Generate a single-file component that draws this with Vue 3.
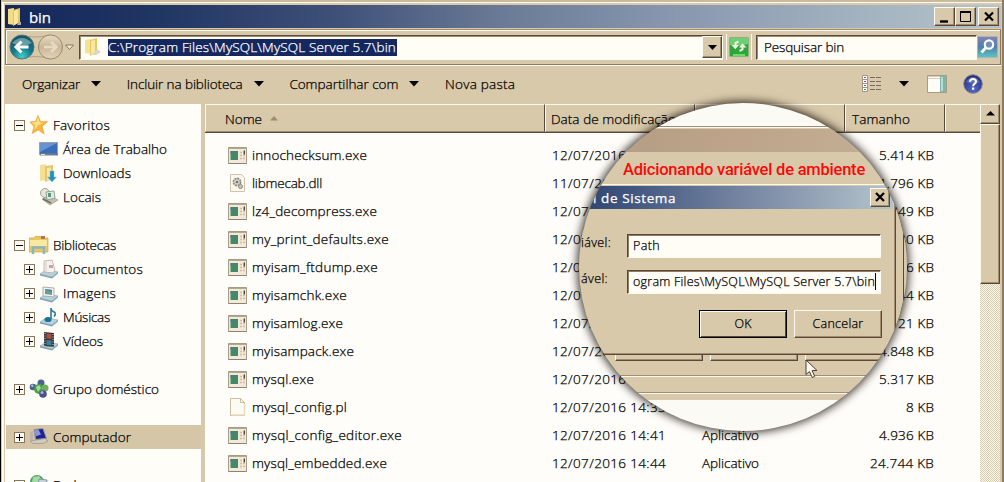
<script setup>
// Spreads a label over a fixed advance width, like hinted bitmap fonts do.
const vFit = {
  mounted(el, { value }) {
    if (!value) return
    const n = el.textContent.length
    const natural = el.getBoundingClientRect().width
    const gap = (value + 1 - natural) / n
    el.style.letterSpacing = gap.toFixed(3) + 'px'
  }
}

const commands = [
  { text: 'Organizar', w: 57, arrow: true },
  { text: 'Incluir na biblioteca', w: 115, arrow: true },
  { text: 'Compartilhar com', w: 108, arrow: true },
  { text: 'Nova pasta', w: 69, arrow: false }
]

const tree = [
  { text: 'Favoritos', w: 56, icon: 'star', box: '-' },
  { text: 'Área de Trabalho', w: 103, icon: 'desktop', sub: true },
  { text: 'Downloads', w: 67, icon: 'downloads', sub: true },
  { text: 'Locais', w: 37, icon: 'places', sub: true },
  {},
  { text: 'Bibliotecas', w: 62, icon: 'library', box: '-' },
  { text: 'Documentos', w: 79, icon: 'docs', box: '+', sub: true },
  { text: 'Imagens', w: 52, icon: 'images', box: '+', sub: true },
  { text: 'Músicas', w: 46, icon: 'music', box: '+', sub: true },
  { text: 'Vídeos', w: 39, icon: 'video', box: '+', sub: true },
  {},
  { text: 'Grupo doméstico', w: 105, icon: 'group', box: '+' },
  {},
  { text: 'Computador', w: 77, icon: 'computer', box: '+', selected: true },
  {},
  { text: 'Rede', w: 30, icon: 'network', box: '+' }
]

const files = [
  { name: 'innochecksum.exe', w: 114, date: '12/07/2016 14:41', type: 'Aplicativo', size: '5.414 KB', sw: 54 },
  { name: 'libmecab.dll', w: 69, date: '11/07/2016 14:41', type: 'Extensão', size: '1.796 KB', sw: 54, icon: 'dll' },
  { name: 'lz4_decompress.exe', w: 124, date: '12/07/2016 14:41', type: 'Aplicativo', size: '4.849 KB', sw: 54 },
  { name: 'my_print_defaults.exe', w: 136, date: '12/07/2016 14:41', type: 'Aplicativo', size: '4.780 KB', sw: 54 },
  { name: 'myisam_ftdump.exe', w: 125, date: '12/07/2016 14:41', type: 'Aplicativo', size: '5.116 KB', sw: 54 },
  { name: 'myisamchk.exe', w: 94, date: '12/07/2016 14:41', type: 'Aplicativo', size: '5.244 KB', sw: 54 },
  { name: 'myisamlog.exe', w: 90, date: '12/07/2016 14:41', type: 'Aplicativo', size: '5.121 KB', sw: 54 },
  { name: 'myisampack.exe', w: 101, date: '12/07/2016 14:41', type: 'Aplicativo', size: '4.848 KB', sw: 54 },
  { name: 'mysql.exe', w: 61, date: '12/07/2016 14:41', type: 'Aplicativo', size: '5.317 KB', sw: 54 },
  { name: 'mysql_config.pl', w: 94, date: '12/07/2016 14:33', type: 'Arquivo PL', size: '8 KB', sw: 27, icon: 'page' },
  { name: 'mysql_config_editor.exe', w: 149, date: '12/07/2016 14:41', type: 'Aplicativo', size: '4.936 KB', sw: 54 },
  { name: 'mysql_embedded.exe', w: 134, date: '12/07/2016 14:44', type: 'Aplicativo', size: '24.744 KB', sw: 63 }
]
</script>

<template>
  <div class="screen">
    <div class="window">
      <div class="titlebar">
        <svg class="ic-folder" width="16" height="20" viewBox="0 0 16 20">
          <path d="M1 2l6-1v17l-6-1z" fill="#f4dc84" /><path d="M6 3l7-2v14l-7 4z" fill="#e9c65c" /><path d="M7 4l4-1v13l-4 2z" fill="#f8e8a0" /><path d="M12 15h2v3h-4z" fill="#b9ae8e" />
        </svg>
        <span v-fit="21" class="t title">bin</span>
        <div class="winbtns">
          <b><svg width="19" height="17"><path d="M5 13.5h8" stroke="#000" stroke-width="2.4" /></svg></b>
          <b><svg width="19" height="17"><path d="M4.5 4h10v9.500h-10z" fill="none" stroke="#000" /><path d="M4 4h11" stroke="#000" stroke-width="2" /></svg></b>
          <b class="close"><svg width="19" height="17"><path d="M6 4.500l8 8M14 4.500l-8 8" stroke="#000" stroke-width="2.200" /></svg></b>
        </div>
      </div>

      <div class="navbar">
        <svg class="navs" width="72" height="30" viewBox="0 0 72 30">
          <defs>
            <radialGradient id="gb" cx=".5" cy=".9" r=".9"><stop offset="0" stop-color="#3fd0cc" /><stop offset=".45" stop-color="#14788a" /><stop offset="1" stop-color="#174f60" /></radialGradient>
            <linearGradient id="gf" x2="0" y2="1"><stop offset="0" stop-color="#e8dcc4" /><stop offset=".5" stop-color="#c9b797" /><stop offset="1" stop-color="#e2d5ba" /></linearGradient>
          </defs>
          <path d="M12 3Q30 7 44 3" fill="none" stroke="#b5a382" /><path d="M12 27Q30 22 44 27" fill="none" stroke="#b5a382" />
          <circle cx="16" cy="15" r="12" fill="url(#gb)" stroke="#5f7775" />
          <path d="M6 11Q16 1 26 11Q16 16 6 11z" fill="#b6d3d5" opacity=".5" />
          <path d="M22.500 15H11M15.500 9.500L10 15l5.500 5.500" fill="none" stroke="#fff" stroke-width="3" />
          <circle cx="44.500" cy="15" r="12" fill="url(#gf)" stroke="#9c8a6e" />
          <path d="M38 15h12M45 10l5.500 5-5.500 5" fill="none" stroke="#e6dac3" stroke-width="2.500" />
          <path d="M59.500 13h8l-4 4.500z" fill="#f4ead6" stroke="#8a775c" />
        </svg>
        <div class="address">
          <svg width="20" height="22" viewBox="0 0 20 22">
            <path d="M2 4l6-1v15l-6-1z" fill="#f6e294" /><path d="M7 4l7-2v14l-7 4z" fill="#e8c766" /><path d="M8 5l4-1v13l-4 2z" fill="#f8e8a0" /><path d="M14 13l4 3-5 3h-4z" fill="#d9d5c9" />
          </svg>
          <span class="sel"><span v-fit="287" class="t">C:\Program Files\MySQL\MySQL Server 5.7\bin</span></span>
          <b class="drop"><svg width="18" height="19"><path d="M5 8h9l-4.500 5z" fill="#000" /></svg></b>
        </div>
        <div class="refresh">
          <svg width="20" height="20" viewBox="0 0 20 20">
            <rect x=".5" y=".5" width="19" height="19" rx="1" fill="#2fa43e" stroke="#8fae81" /><path d="M1 1h18v6Q10 10 1 8z" fill="#6fcf77" /><path d="M4 17h12v2H4z" fill="#61e260" />
            <path d="M9.500 4.500L6.500 6v3M10.500 14l3-1.500v-3" fill="none" stroke="#edf7dc" stroke-width="2" /><path d="M2.500 8h7.500L6.300 12.300zM10 10.500h7.500l-4-4.300z" fill="#edf7dc" />
          </svg>
        </div>
        <div class="search"><span v-fit="79" class="t">Pesquisar bin</span></div>
        <svg class="mag" width="21" height="22" viewBox="0 0 21 22">
          <defs><linearGradient id="gm" x2="0" y2="1"><stop offset="0" stop-color="#8583b4" /><stop offset=".5" stop-color="#4f7fa9" /><stop offset="1" stop-color="#5cc6c4" /></linearGradient></defs>
          <rect x=".5" y=".5" width="20" height="21" fill="url(#gm)" stroke="#a8b5bb" />
          <circle cx="12" cy="8.500" r="4.200" fill="#6d92b6" stroke="#fff" stroke-width="2.200" /><path d="M9 11.500L4.500 16.500" stroke="#fff" stroke-width="2.800" />
        </svg>
      </div>

      <div class="toolbar">
        <div v-for="c in commands" :key="c.text" class="cmd">
          <span v-fit="c.w" class="t">{{ c.text }}</span>
          <svg v-if="c.arrow" width="10" height="6"><path d="M0 0h10L5 5.500z" fill="#000" /></svg>
        </div>
        <div class="tools">
          <svg width="20" height="17" viewBox="0 0 20 17">
            <path d="M.5.500h5v16h-5zM.5 4.500h5M.5 8.500h5M.5 12.500h5" fill="#fff" stroke="#a39380" /><path d="M2 2.500h2M2 10.500h2" stroke="#4b62b5" /><path d="M2 6.500h2" stroke="#e0307a" /><path d="M2 14.500h2" stroke="#3f9b4c" />
            <path d="M8 2.500h5M14 2.500h5M8 6.500h5M14 6.500h5M8 10.500h5M14 10.500h5M8 14.500h5M14 14.500h5" stroke="#7c6b5c" />
          </svg>
          <svg class="dd" width="10" height="6"><path d="M0 0h10L5 5.500z" fill="#000" /></svg>
          <svg class="pane" width="20" height="18" viewBox="0 0 20 18">
            <path d="M.5.500h19v17H.5z" fill="#fffdf6" stroke="#a79b84" /><path d="M1 1h12v3H1z" fill="#e4c9b8" /><path d="M1 2.500h12" stroke="#fffdf6" /><path d="M13 1h6v16h-6z" fill="#7fb6aa" /><path d="M14 2h2v14h-2z" fill="#b9dcd2" />
          </svg>
          <svg class="help" width="20" height="20" viewBox="0 0 20 20">
            <defs><radialGradient id="gh" cx=".5" cy=".8" r=".8"><stop offset="0" stop-color="#5568c4" /><stop offset="1" stop-color="#202c7c" /></radialGradient></defs>
            <circle cx="10" cy="10" r="9.300" fill="url(#gh)" stroke="#87848e" /><path d="M3 8Q10-2 17 8Q10 11 3 8z" fill="#fff" opacity=".22" />
            <path d="M7 7.800Q7.200 5 10 5q3 0 3 2.500 0 1.300-1.500 2.300-1.400.9-1.400 2.400" fill="none" stroke="#fff" stroke-width="2" /><path d="M9 13.500h2.200v2.200H9z" fill="#fff" />
          </svg>
        </div>
      </div>

      <div class="content">
        <div class="tree">
          <div v-for="(n, i) in tree" :key="i" class="node" :class="{ sub: n.sub, selected: n.selected }">
            <template v-if="n.text">
              <svg class="box" width="11" height="11" viewBox="0 0 11 11">
                <template v-if="n.box"><rect x=".5" y=".5" width="10" height="10" fill="#fffdf8" stroke="#8b7659" /><path d="M2 5.500h7" stroke="#000" /><path v-if="n.box === '+'" d="M5.500 2v7" stroke="#000" /></template>
              </svg>
              <svg class="nic" width="20" height="20" viewBox="0 0 20 20">
                <template v-if="n.icon === 'star'"><path d="M9 .5l2.500 6 7 .2-5.300 4.700 2 7.600-6-4-6 3.500 1.800-7L.8 7l6-.7z" fill="#f6b53c" stroke="#e9a33a" stroke-width=".7" /><path d="M9 2l1.800 5.500 4 .3-5 2.200-4.500 5 1-5-4-2.500 5-.5z" fill="#ffe08a" /></template>
                <template v-else-if="n.icon === 'desktop'"><path d="M.5 3.500h18v12H.5z" fill="#3c6db8" stroke="#9aa0a6" /><path d="M1 4h17L1 13z" fill="#7fa5dc" opacity=".65" /><path d="M1 14.500h18v2H1z" fill="#707f91" /><path d="M2 15.500h4" stroke="#e7e4d5" /></template>
                <template v-else-if="n.icon === 'downloads'"><path d="M1 2l6-1v16l-6 1z" fill="#f5df93" /><path d="M6 3l8-1v14l-8 3z" fill="#e6c671" /><path d="M8 5l4-.5V16l-4 1.500z" fill="#f8e8a7" /><path d="M11 8h4v6h2.500L13 19l-4.500-5H11z" fill="#2a8fb8" stroke="#7fc0d4" stroke-width=".5" /></template>
                <template v-else-if="n.icon === 'places'"><circle cx="6" cy="6" r="4.500" fill="#e7e4da" stroke="#a5a294" /><path d="M3 12l8-3 8 4-8 5z" fill="#c2bea7" stroke="#95917c" stroke-width=".6" /><path d="M7 5l8-1 1 7-8 2z" fill="#dfe9e4" stroke="#8fa59c" /><path d="M9 6h3v4H9z" fill="#5c9773" /><path d="M4 12l8 4" stroke="#6a7460" stroke-width="1.500" /></template>
                <template v-else-if="n.icon === 'library'"><path d="M0 3h5l1-1.500h6L13 3h6v14H0z" fill="#ecc75f" stroke="#cfa64a" stroke-width=".7" /><path d="M1 5h17v6H1z" fill="#fae7a0" /><path d="M12 1h4v3h-4z" fill="#b8725a" /><path d="M4 19v-6.500h11V19" fill="none" stroke="#86b6c2" stroke-width="2.500" /></template>
                <template v-else-if="n.icon === 'group'"><circle cx="4" cy="8" r="3.300" fill="#4c5f91" /><circle cx="3.300" cy="6.800" r="1.200" fill="#b4c0dc" /><circle cx="12" cy="4" r="3.500" fill="#49628f" /><circle cx="10" cy="10" r="5" fill="#49a045" /><path d="M7 8l3-2 2 3-3 4z" fill="#a9d998" /><circle cx="16" cy="9" r="3.500" fill="#6fb15b" /><circle cx="14" cy="15" r="3.800" fill="#4a4f90" /><circle cx="13" cy="13.500" r="1.500" fill="#aeb6dc" /></template>
                <template v-else-if="n.icon === 'computer'"><path d="M5 2.500l9-1 3.500 10-11 1z" fill="#1f2391" stroke="#9c9a9a" /><path d="M5.500 3l4-.4 2.500 5-5.500 2z" fill="#9093d6" /><path d="M1 5l3-1v9H1z" fill="#b9b5a8" /><path d="M1 14l15-2.500 3 2.500-5 2.500H4z" fill="#d0cbbd" stroke="#8e897c" stroke-width=".6" /></template>
                <template v-else-if="n.icon === 'network'"><circle cx="8" cy="7" r="7" fill="#4b9a6b" /><path d="M4 2l6-1 3 4-5 3-5-1z" fill="#a2dca3" /><path d="M10 4l8 1-1 8H9z" fill="#c8d4dc" stroke="#8594a4" /></template>
                <template v-else>
                  <path d="M1 15l6-4 12 2-6 5z" fill="#b9d3dd" stroke="#8dadb9" stroke-width=".7" />
                  <path d="M1 15l12 3 6-5v1.500L13 19.500 1 16.500z" fill="#7fa3b3" />
                  <template v-if="n.icon === 'docs'"><path d="M5 2l8-1 3 10-2 3-9-1z" fill="#f5f1ec" stroke="#b9a9a2" stroke-width=".8" /><path d="M10 6h4v3h-4z" fill="#c2a7a8" /><path d="M7 3v10" stroke="#d5ccc6" /></template>
                  <template v-else-if="n.icon === 'images'"><path d="M4 4l11 1v9l-11-1z" fill="#eff2ee" stroke="#a6b0ab" /><path d="M6 6l7 1v5l-7-1z" fill="#6b9c92" /><path d="M6 6l7 1v2z" fill="#54789d" /></template>
                  <template v-else-if="n.icon === 'music'"><ellipse cx="9" cy="12.500" rx="3.500" ry="2.600" fill="#1f7091" /><path d="M12 12V1q0 3 4 4.500 1 2-1 4" fill="none" stroke="#2a7a98" stroke-width="1.600" /></template>
                  <template v-else><path d="M5 1l10 1v14l-10-1z" fill="#30383a" /><path d="M7.500 2.500l5 .5v5l-5-.5z" fill="#b44a3c" /><path d="M7.500 9l5 .5v5l-5-.5z" fill="#3d7fa0" /><path d="M6 2v13M14 3v13" stroke="#d8dcd6" stroke-dasharray="1 1.500" /></template>
                </template>
              </svg>
              <span v-fit="n.w" class="t">{{ n.text }}</span>
            </template>
          </div>
        </div>

        <div class="list">
          <div class="heads">
            <div class="head hname"><span v-fit="36" class="t">Nome</span><svg width="8" height="5"><path d="M0 4.500h8L4 0z" fill="#a08b6c" /></svg></div>
            <div class="head hdate"><span v-fit="124" class="t">Data de modificação</span></div>
            <div class="head htype"><span class="t">Tipo</span></div>
            <div class="head hsize"><span v-fit="57" class="t">Tamanho</span></div>
            <div class="head hrest"></div>
          </div>
          <div class="rows">
            <div v-for="f in files" :key="f.name" class="row">
              <div class="cname">
                <svg v-if="!f.icon" width="19" height="17" viewBox="0 0 19 17">
                  <path d="M.5.500h18v16H.5z" fill="#f2ead8" stroke="#a99c86" /><path d="M1 1.500h17" stroke="#b5a98f" /><path d="M2.500 4h7.500v9H2.500z" fill="#438a66" /><path d="M2.500 4h4v3h-4z" fill="#557c85" /><path d="M12 5.500h2M12 8.500h2M15 8.500h2M12 11.500h2M15 11.500h2" stroke="#dcb8a4" stroke-width="1.500" /><path d="M16.300 3.500v4" stroke="#3a3a34" stroke-width="1.300" /><path d="M.5 16.500h18" stroke="#8f8270" />
                </svg>
                <svg v-else-if="f.icon === 'dll'" width="19" height="18" viewBox="0 0 19 18">
                  <path d="M2.500.500h11l3 3v14h-14z" fill="#fbf7ed" stroke="#cfc5ad" /><circle cx="9" cy="8" r="3.600" fill="#d6d4ca" stroke="#88877e" stroke-width="1.600" stroke-dasharray="2 .8" /><circle cx="9" cy="8" r="1.300" fill="#77766d" /><circle cx="12.500" cy="12.500" r="2" fill="#c5c3b8" stroke="#8d8b80" />
                </svg>
                <svg v-else width="19" height="18" viewBox="0 0 19 18"><path d="M2.500.500h10l4 4v13h-14z" fill="#fdfaf1" stroke="#cbbf9f" /><path d="M12.500.500v4h4" fill="none" stroke="#cbbf9f" /><path d="M4 17h12.500V6" fill="none" stroke="#e7dcc0" stroke-width="1.500" /></svg>
                <span v-fit="f.w" class="t">{{ f.name }}</span>
              </div>
              <div class="cdate"><span v-fit="113" class="t">{{ f.date }}</span></div>
              <div class="ctype"><span v-fit="f.type === 'Aplicativo' ? 56 : 0" class="t">{{ f.type }}</span></div>
              <div class="csize"><span v-fit="f.sw" class="t">{{ f.size }}</span></div>
            </div>
          </div>
        </div>

        <div class="scroll">
          <b class="up"><svg width="18" height="17"><path d="M5 10.500h9L9.500 6z" fill="#000" /></svg></b>
          <b class="thumb"></b>
        </div>
      </div>
    </div>

    <div class="lens">
      <div class="l-white"></div>
      <div class="l-bar"></div>
      <div class="l-note"><span v-fit="241" class="t note">Adicionando variável de ambiente</span></div>
      <div class="l-under">
        <div class="ubtns"><b></b><b></b><b></b></div>
      </div>
      <div class="l-foot"></div>
      <div class="dialog">
        <div class="d-title"><span v-fit="82" class="t">l de Sistema</span><b class="d-close"><svg width="18" height="17"><path d="M5 4l8 8M13 4l-8 8" stroke="#000" stroke-width="2.200" /></svg></b></div>
        <div class="field"><span class="lab"><span v-fit="29" class="t">iável:</span></span><div class="inp"><span v-fit="26" class="t">Path</span></div></div>
        <div class="field f2"><span class="lab"><span v-fit="26" class="t">ável:</span></span><div class="inp"><span v-fit="241" class="t">ogram Files\MySQL\MySQL Server 5.7\bin</span><i></i></div></div>
        <div class="d-btns">
          <div class="btn ok"><span v-fit="16" class="t">OK</span></div>
          <div class="btn"><span v-fit="50" class="t">Cancelar</span></div>
        </div>
      </div>
      <svg class="cursor" width="14" height="20" viewBox="0 0 14 20"><path d="M1 1v14.500l3.500-3 2.700 6 2.500-1.100-2.600-5.900H12z" fill="#fff8ee" stroke="#4f3f38" /></svg>
    </div>
  </div>
</template>

<style>
html, body { margin: 0; background: #000; overflow: hidden; }
</style>

<style scoped>
* { box-sizing: border-box; }
.screen { position: relative; width: 1004px; height: 482px; overflow: hidden; background: #000; padding-left: 1px; font: 300 13.5px/18px "Open Sans", "Noto Sans", sans-serif; color: #000; }
.t { display: inline-block; flex: none; white-space: pre; font-variant-ligatures: none; -webkit-text-stroke: .25px currentColor; }
svg { display: block; flex: none; }
b { display: block; flex: none; background: #d8c9aa; border: 1px solid; border-color: #fffaf0 #5a4738 #5a4738 #fffaf0; box-shadow: inset -1px -1px #a08c70; }

.window { width: 1003px; height: 482px; background: #d8c9aa; border-left: 1px solid #d8c9aa; border-right: 2px solid #8d7a60; padding: 5px 1px 0 3px; box-shadow: inset 0 2px #c9bb9f, inset 0 3px #fffaf0, inset 2px 0 #fffaf0; }
.titlebar { height: 23px; display: flex; align-items: center; background: linear-gradient(90deg, #14275a 0, #1f3563 15%, #3e5078 33%, #6b7b96 50%, #8795ae 66%, #9dadbc 82%, #b5c4cb 100%); }
.ic-folder { margin-left: 2px; }
.title { margin-left: 6px; color: #fff; font-size: 15px; font-weight: 500; }
.winbtns { margin-left: auto; display: flex; margin-right: 2px; }
.winbtns b { width: 21px; height: 19px; }
.winbtns .close { margin-left: 2px; }

.navbar { margin-top: 1px; height: 36px; display: flex; align-items: center; border: 1px solid #8d7a60; border-top-color: #a08d70; box-shadow: inset 1px 1px #fffaf0, 0 1px #fffaf0; }
.navs { margin: 0 1px 0 0; }
.address { width: 644px; height: 25px; display: flex; align-items: center; background: #fffdf6; border: 1px solid; border-color: #5b4a3b #fffaf0 #fffaf0 #5b4a3b; box-shadow: inset 1px 1px #a08c70; padding-left: 3px; }
.sel { background: #14275e; color: #fff; height: 17px; width: 289px; margin-left: 5px; line-height: 17px; flex: none; }
.sel .t { line-height: 17px; display: block; width: max-content; }
.drop { margin-left: auto; width: 20px; height: 22px; }
.refresh { width: 26px; height: 26px; margin-left: 3px; padding: 3px 2px; border-left: 1px solid #fffaf0; border-right: 1px solid #fffaf0; }
.search { margin-left: 4px; width: 221px; height: 25px; background: #fffdf6; border: 1px solid; border-color: #5b4a3b #fffaf0 #fffaf0 #5b4a3b; box-shadow: inset 1px 1px #a08c70; padding: 2px 0 0 7px; }

.toolbar { height: 39px; display: flex; align-items: center; padding: 0 0 2px 17px; }
.cmd { display: flex; align-items: center; gap: 11px; margin-right: 25.7px; }
.tools { margin-left: auto; display: flex; align-items: center; padding-right: 18px; }
.dd { margin-left: 17px; }
.pane { margin-left: 18px; }
.help { margin-left: 16px; }

.content { display: flex; height: 378px; }
.tree { width: 196px; flex: none; background: #fffdf8; padding-top: 9px; overflow: hidden; }
.node { height: 24px; display: flex; align-items: center; padding-left: 9px; }
.node.sub { padding-left: 19px; }
.node .nic { margin-left: 4px; }
.node .t { margin-left: 4px; }
.node.selected { background: #d5c6a8; margin-left: 1px; padding-left: 8px; }

.list { margin-left: 4px; width: 775px; flex: none; background: #fffdf9; overflow: hidden; }
.heads { display: flex; height: 29px; border-bottom: 1px solid #5b4a3b; box-shadow: inset 0 -1px #a08c70; background: #d8c9aa; }
.head { border: 1px solid; border-color: #fffaf0 #5b4a3b transparent #fffaf0; display: flex; align-items: center; flex: none; padding-top: 1px; }
.hname { width: 340px; padding-left: 19px; gap: 8px; }
.hdate { width: 150px; padding-left: 5px; }
.htype { width: 150px; padding-left: 6px; }
.hsize { width: 100px; padding-left: 6px; }
.hrest { width: 36px; }
.rows { padding-top: 8px; }
.row { height: 28px; display: flex; align-items: center; }
.cname { width: 347px; padding-left: 23px; display: flex; align-items: center; gap: 5px; flex: none; }
.cdate { width: 150px; flex: none; }
.ctype { width: 140px; flex: none; }
.csize { width: 92px; display: flex; justify-content: flex-end; flex: none; }

.scroll { width: 20px; flex: none; background: repeating-conic-gradient(#fffaf0 0 25%, #d8c9aa 0 50%) 0 0 / 2px 2px; }
.up { width: 20px; height: 20px; }
.thumb { width: 20px; height: 160px; }

.lens { position: absolute; left: 579px; top: 103px; width: 328px; height: 328px; border-radius: 50%; overflow: hidden; background: #fcfaf5; display: flex; flex-direction: column; }
.screen::after { content: ""; position: absolute; left: 579px; top: 103px; width: 328px; height: 328px; border-radius: 50%; box-shadow: 0 0 9px 2px rgba(20, 14, 8, .8); pointer-events: none; }
.l-white { height: 25px; flex: none; border-bottom: 1px solid #fffaf0; box-shadow: inset 0 -1px #9c8d76; }
.l-bar { height: 24px; flex: none; background: linear-gradient(90deg, #b39c83, #bda48b 50%, #c5b195); border-top: 1px solid #d8c9aa; }
.l-note { height: 32px; flex: none; background: #d8c9aa; padding: 8px 0 0 44px; }
.note { font: 500 16.5px/20px Roboto, sans-serif; color: #fb0808; -webkit-text-stroke: 0; }
.l-under { height: 210px; flex: none; background: #d8c9aa; padding: 167px 0 0 36px; border-bottom: 1px solid #fffaf0; box-shadow: inset 0 -1px #a08c70; background-image: linear-gradient(#a08c70 50%, #fffaf0 50%); background-size: 328px 2px; background-position: 0 191px; background-repeat: no-repeat; }
.ubtns { display: flex; gap: 7px; }
.ubtns b { width: 88px; height: 10px; }
.l-foot { height: 6px; flex: none; background: #d8c9aa; }
.dialog { position: absolute; left: -20px; top: 81px; width: 337px; height: 171px; background: #d8c9aa; border: 1px solid; border-color: #fffaf0 #5b4738 #5b4738 #fffaf0; box-shadow: inset -1px -1px #a08c70, 7px 0 #d8c9aa, 8px 0 #5b4738; }
.d-title { height: 23px; margin: 1px 2px 0; display: flex; align-items: center; padding-left: 31px; background: linear-gradient(90deg, #283c68, #40557f 20%, #6c7d9b 48%, #8b9ab0 70%, #b5c5cc); color: #fff; font-size: 13.5px; font-weight: 500; }
.d-close { margin-left: auto; width: 20px; height: 19px; margin-right: 3px; }
.field { display: flex; padding-left: 22px; margin-top: 25px; font-size: 12.5px; }
.field.f2 { margin-top: 12px; }
.lab { width: 45px; flex: none; }
.lab .t { margin-left: -1px; }
.inp { width: 254px; height: 24px; background: #fffdf6; border: 1px solid; border-color: #5b4738 #fffaf0 #fffaf0 #5b4738; box-shadow: inset 1px 1px #8f7a62; padding: 2px 0 0 5px; display: flex; }
.inp i { width: 1px; height: 17px; background: #000; }
.d-btns { display: flex; gap: 7px; padding-left: 139px; margin-top: 16px; font-size: 12.5px; }
.btn { width: 88px; height: 28px; display: flex; align-items: center; justify-content: center; border: 1px solid; border-color: #fffaf0 #5b4738 #5b4738 #fffaf0; box-shadow: inset -1px -1px #a08c70; }
.btn.ok { border-color: #000; box-shadow: inset 1px 1px #fffaf0, inset -1px -1px #5b4738; }
.cursor { position: absolute; left: 226px; top: 256px; }
</style>
